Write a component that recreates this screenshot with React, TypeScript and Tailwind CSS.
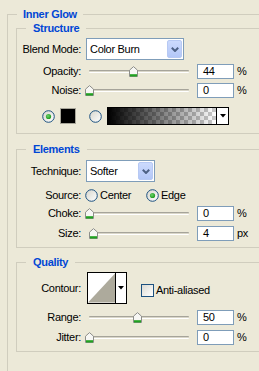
import React from "react";

type Kids = { children?: React.ReactNode; className?: string };

const Thumb = () => (
  <svg width="9" height="11" viewBox="0 0 9 11">
    <path d="M0.5 10.5V4.2L4.5 0.6L8.5 4.2V10.5Z" fill="#F7F7F4" stroke="#8D8E8A" />
    <rect x="1" y="8.2" width="7" height="2.3" fill="#21A121" />
  </svg>
);

// pos = thumb offset inside the slider box, px
const Slider = ({ pos }: { pos: number }) => (
  <div className="relative ml-[5px] h-[15px] w-[106px]">
    <div className="absolute left-[3px] top-[6px] h-[3px] w-[100px] rounded-[1px] border-t border-b border-t-[#A6A49A] border-b-white bg-[#D9D6C8]" />
    <div className="absolute top-[2px] flex" style={{ left: pos }}>
      <Thumb />
    </div>
  </div>
);

const NumBox = ({ value, unit }: { value: string; unit: string }) => (
  <>
    <div className="ml-[5px] flex h-[15px] w-[37px] items-center border border-[#7F9DB9] bg-white pl-[5px]">
      {value}
    </div>
    <span className="ml-[3px]">{unit}</span>
  </>
);

const Radio = ({ checked }: { checked?: boolean }) => (
  <svg width="13" height="13" viewBox="0 0 13 13" className="shrink-0">
    <defs>
      <linearGradient id="radioFill" x1="0" y1="0" x2="1" y2="1">
        <stop offset="0" stopColor="#D6D5CC" />
        <stop offset="1" stopColor="#FFFFFF" />
      </linearGradient>
      <radialGradient id="radioDot" cx="0.4" cy="0.4" r="0.6">
        <stop offset="0" stopColor="#6BD36B" />
        <stop offset="1" stopColor="#1E9A1E" />
      </radialGradient>
    </defs>
    <circle cx="6.5" cy="6.5" r="5.8" fill="url(#radioFill)" stroke="#1C5180" />
    {checked && <circle cx="6.5" cy="6.5" r="2.6" fill="url(#radioDot)" />}
  </svg>
);

const Chevron = () => (
  <svg width="8" height="5" viewBox="0 0 8 5">
    <path d="M0.8 0.8L4 4L7.2 0.8" fill="none" stroke="#4D6185" strokeWidth="2" />
  </svg>
);

const Select = ({ value, className }: { value: string; className: string }) => (
  <div className={`ml-[5px] flex h-[22px] items-center border border-[#7F9DB9] bg-white ${className}`}>
    <span className="flex-1 pl-[3px]">{value}</span>
    <div className="mr-[1px] flex h-[18px] w-[15px] items-center justify-center rounded-[2px] border border-[#B7C9F3] bg-gradient-to-b from-[#CCDAFD] to-[#B3C7F7]">
      <Chevron />
    </div>
  </div>
);

const Row = ({ label, children, className = "" }: Kids & { label: string }) => (
  <div className={`flex items-center ${className}`}>
    <span className="w-[64px] text-right">{label}</span>
    {children}
  </div>
);

const Group = ({ title, children, className = "" }: Kids & { title: string }) => (
  <fieldset className={`ml-[8px] w-[290px] border border-[#D0CDBE] ${className}`}>
    <legend className="ml-[9px] px-[7px] font-bold leading-[14px] text-[#0046D5]">{title}</legend>
    {children}
  </fieldset>
);

const GradientStrip = () => (
  <svg width="108" height="16" viewBox="0 0 108 16">
    <defs>
      <pattern id="checker" width="8" height="8" patternUnits="userSpaceOnUse">
        <rect width="8" height="8" fill="#FFFFFF" />
        <rect width="4" height="4" fill="#C9C9C9" />
        <rect x="4" y="4" width="4" height="4" fill="#C9C9C9" />
      </pattern>
      <linearGradient id="fade" x1="0" y1="0" x2="1" y2="0">
        <stop offset="0" stopColor="#000" stopOpacity="1" />
        <stop offset="1" stopColor="#000" stopOpacity="0" />
      </linearGradient>
    </defs>
    <rect width="108" height="16" fill="url(#checker)" />
    <rect width="108" height="16" fill="url(#fade)" />
  </svg>
);

const DownTri = () => (
  <svg width="6" height="4" viewBox="0 0 6 4">
    <path d="M0 0H6L3 3.5Z" fill="#000" />
  </svg>
);

export default function App() {
  return (
    <div className="h-[371px] w-[259px] overflow-hidden bg-[#ECE9D8] font-['Liberation_Sans',Arial,sans-serif] text-[11px] leading-[13px] tracking-[-0.3px] text-black">
      <fieldset className="ml-[7px] mt-[7px] w-[300px] border border-[#D0CDBE] pb-[40px]">
        <legend className="ml-[9px] px-[6px] font-bold leading-[14px] text-[#0046D5]">Inner Glow</legend>

        <Group title="Structure" className="pb-[8px]">
          <Row label="Blend Mode:" className="mt-[3px]">
            <Select value="Color Burn" className="w-[98px]" />
          </Row>
          <Row label="Opacity:" className="mt-[4px]">
            <Slider pos={43} />
            <NumBox value="44" unit="%" />
          </Row>
          <Row label="Noise:" className="mt-[4px]">
            <Slider pos={-1} />
            <NumBox value="0" unit="%" />
          </Row>
          <div className="mt-[9px] flex h-[18px] items-center">
            <div className="ml-[25px] flex">
              <Radio checked />
            </div>
            <div className="ml-[5px] h-[16px] w-[16px] border border-[#A8A69A] bg-black" />
            <div className="ml-[13px] flex">
              <Radio />
            </div>
            <div className="ml-[5px] flex h-[18px] w-[122px] border border-black bg-white">
              <div className="flex flex-1 items-center border-r border-black">
                <GradientStrip />
              </div>
              <div className="flex w-[11px] items-center justify-center">
                <DownTri />
              </div>
            </div>
          </div>
        </Group>

        <Group title="Elements" className="mt-[8px] pb-[6px]">
          <Row label="Technique:" className="mt-[4px]">
            <Select value="Softer" className="w-[69px]" />
          </Row>
          <Row label="Source:" className="mt-[7px]">
            <div className="ml-[4px] flex items-center">
              <Radio />
              <span className="ml-[2px] w-[46px]">Center</span>
              <Radio checked />
              <span className="ml-[2px]">Edge</span>
            </div>
          </Row>
          <Row label="Choke:" className="mt-[4px]">
            <Slider pos={-1} />
            <NumBox value="0" unit="%" />
          </Row>
          <Row label="Size:" className="mt-[5px]">
            <Slider pos={3} />
            <NumBox value="4" unit="px" />
          </Row>
        </Group>

        <Group title="Quality" className="mt-[7px] pb-[6px]">
          <Row label="Contour:" className="mt-[3px]">
            <div className="ml-[6px] flex h-[32px] w-[40px] border border-black bg-white">
              <svg width="28" height="30" viewBox="0 0 28 30" className="border-r border-black">
                <rect width="28" height="30" fill="#FFFFFF" />
                <path d="M0 30L28 0V30Z" fill="#ADAA9C" />
              </svg>
              <div className="flex flex-1 items-center justify-center">
                <DownTri />
              </div>
            </div>
            <div className="ml-[14px] mt-[4px] h-[13px] w-[13px] border border-[#1C5180] bg-gradient-to-br from-[#DCDBD3] to-white" />
            <span className="ml-[2px] mt-[4px]">Anti-aliased</span>
          </Row>
          <Row label="Range:" className="mt-[6px]">
            <Slider pos={47} />
            <NumBox value="50" unit="%" />
          </Row>
          <Row label="Jitter:" className="mt-[5px]">
            <Slider pos={-1} />
            <NumBox value="0" unit="%" />
          </Row>
        </Group>
      </fieldset>
    </div>
  );
}
